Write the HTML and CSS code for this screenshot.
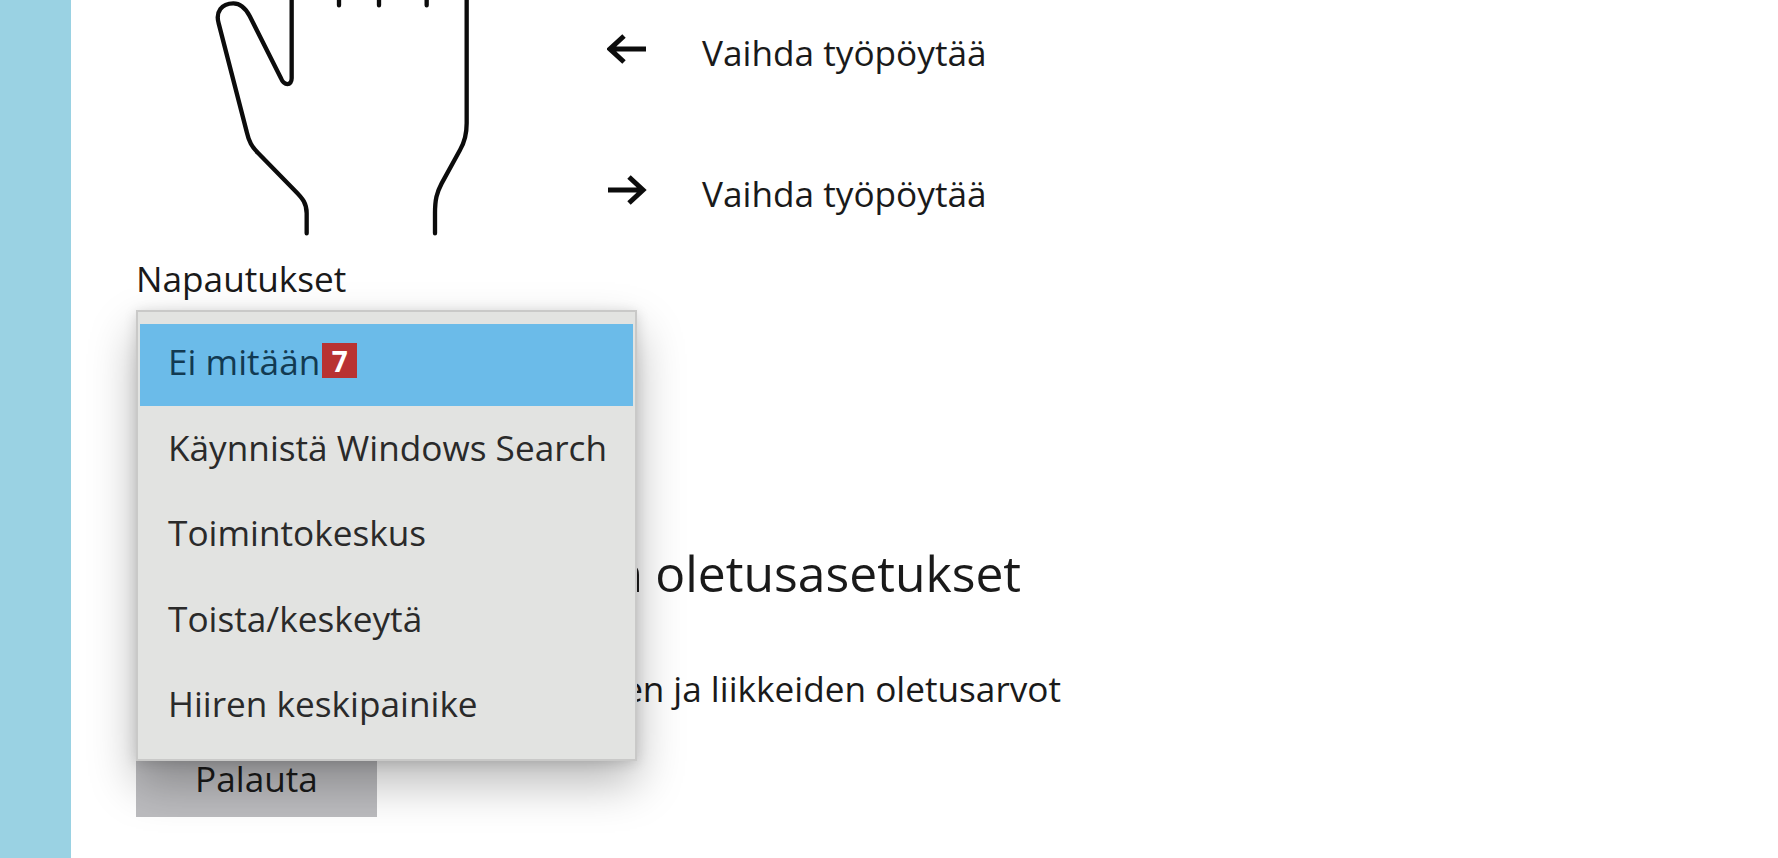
FILE: index.html
```html
<!DOCTYPE html>
<html lang="fi">
<head>
<meta charset="utf-8">
<title>Kosketuslevy</title>
<link rel="stylesheet" href="styles.css">
</head>
<body>
<div class="app">
  <aside class="sidebar"></aside>
  <main class="content">
    <section class="gesture-block">
      <svg class="hand" viewBox="0 0 1080 720" width="360" height="240" aria-hidden="true">
        <path class="hand-line" d="M380 700V640C380 610 368 595 345 572L235 460C215 440 207 425 200 395L116 70C106 36 125 10 160 10C182 10 197 25 209 48L303 235C312 258 335 258 335 235V0"/>
        <path class="hand-line" d="M860 0V370C860 405 855 425 840 450L785 550C770 578 765 600 765 640V700"/>
        <path class="hand-line" d="M477 0V16M597 0V16M740 0V16"/>
      </svg>
      <div class="gestures">
        <div class="gesture">
          <svg class="arrow" viewBox="0 0 40 32" width="40" height="32" aria-hidden="true"><path d="M39 16H3M17 3L3 16L17 29"/></svg>
          <span class="gesture-text">Vaihda työpöytää</span>
        </div>
        <div class="gesture">
          <svg class="arrow" viewBox="0 0 40 32" width="40" height="32" aria-hidden="true"><path d="M1 16H36M22 3L36 16L22 29"/></svg>
          <span class="gesture-text">Vaihda työpöytää</span>
        </div>
      </div>
    </section>
    <label class="field-label">Napautukset</label>
    <h2 class="reset-title"><span class="title-start">Palauta kosketuslevyn </span>oletusasetukset</h2>
    <p class="reset-text"><span class="text-start">Palauta kosketuslevyn asetusten </span>ja liikkeiden oletusarvot</p>
    <button class="reset-button">Palauta</button>
    <ul class="menu">
      <li class="menu-item selected">Ei mitään<span class="badge">7</span></li>
      <li class="menu-item">Käynnistä Windows Search</li>
      <li class="menu-item">Toimintokeskus</li>
      <li class="menu-item">Toista/keskeytä</li>
      <li class="menu-item">Hiiren keskipainike</li>
    </ul>
  </main>
</div>
</body>
</html>
```
FILE: styles.css
```css
* { box-sizing: border-box; }
html, body { margin: 0; height: 100%; overflow: hidden; background: #fff; }
body { font-family: "Open Sans", "Noto Sans", sans-serif; color: #1a1a1a; font-size: 35.2px; }
.app { display: flex; height: 100vh; }
.sidebar { width: 71px; background: #9ad2e3; flex: none; }
.content { flex: 1; position: relative; padding-left: 65px; }
.gesture-block { display: flex; height: 240px; }
.hand { margin-left: 44px; flex: none; }
.hand-line { fill: none; stroke: #0c0c0c; stroke-width: 13; stroke-linecap: round; stroke-linejoin: round; }
.gestures { margin-left: 67px; padding-top: 19px; display: flex; flex-direction: column; gap: 81px; }
.gesture { display: flex; align-items: center; gap: 55px; height: 60px; }
.gesture-text { padding-top: 5px; }
.arrow { flex: none; }
.arrow path { fill: none; stroke: #0c0c0c; stroke-width: 5; }
.field-label { display: block; margin-top: 15px; line-height: 46px; }
.reset-title { margin: 241px 0 0; font-weight: 400; font-size: 49.8px; line-height: 62px; }
.title-start { letter-spacing: -0.33px; }
.reset-text { margin: 60.7px 0 0; line-height: 46px; }
.text-start { letter-spacing: -0.15px; }
.reset-button { display: block; margin-top: 29px; width: 241px; height: 77px; border: 0; padding: 0; background: #bcbcbf; color: #1a1a1a; font: inherit; }
.menu { position: absolute; left: 65px; top: 310px; width: 501px; height: 451px; margin: 0; padding: 12px 2px 0; list-style: none; background: #e2e3e1; border: 2px solid #c9c9c8; box-shadow: 0 22px 44px rgba(0,0,0,.28), 0 2px 12px rgba(0,0,0,.14); }
.menu-item { height: 85.5px; padding: 0 0 11px 28px; display: flex; align-items: center; color: #2a2a2a; }
.selected { height: 82px; margin-bottom: 3.5px; padding-bottom: 7.4px; background: #6bbbe9; color: #123a52; }
.badge { width: 35px; height: 35px; margin-left: 2px; align-self: flex-start; margin-top: 19px; background: #b93232; color: #fff; font-weight: 700; font-size: 28px; display: flex; align-items: center; justify-content: center; }
```
